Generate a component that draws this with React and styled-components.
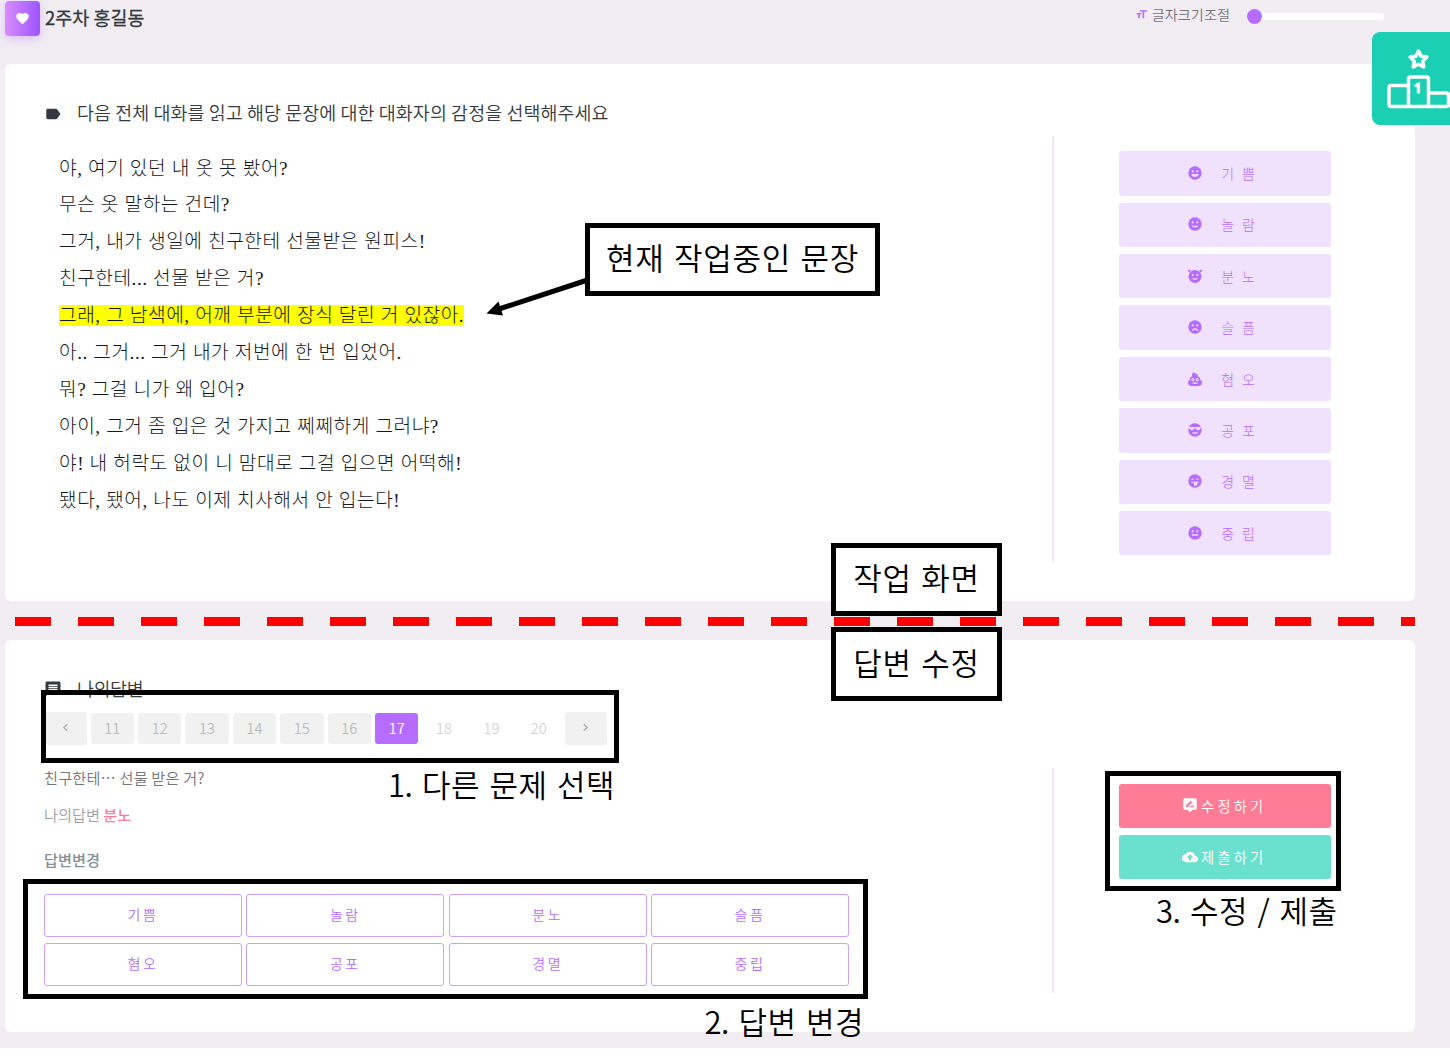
import React from "react";
import styled, { createGlobalStyle } from "styled-components";
import {
  MdFavorite, MdLabel, MdFormatSize, MdMessage, MdChevronLeft, MdChevronRight,
  MdCloudUpload,
} from "react-icons/md";

const GlobalStyle = createGlobalStyle`
  *, *::before, *::after { box-sizing: border-box; }
  body { margin: 0; background: #fff; overflow: hidden; }
`;

const sans = `"Noto Sans CJK KR", sans-serif`;
const serif = `"Liberation Serif", "Noto Sans CJK KR", serif`;
const purple = "#b66dff";

const Page = styled.div`
  position: relative;
  width: 1450px;
  height: 1048px;
  padding-left: 5px;
  background: #f1edf3;
  font-family: ${sans};
  font-weight: 350;
  color: #343a40;
`;

const Header = styled.header`
  display: flex;
  align-items: flex-start;
  justify-content: space-between;
  height: 64px;
  padding: 1px 66px 0 0;
`;

const Brand = styled.div`
  display: flex;
  align-items: flex-start;
  gap: 5px;
`;

const BrandIcon = styled.span`
  display: grid;
  place-items: center;
  width: 35px;
  height: 35px;
  border-radius: 4px;
  color: #fff;
  font-size: 15px;
  background: linear-gradient(to right, #da8cff, #9a55ff);
  box-shadow: 0 3px 8px rgba(182, 109, 255, 0.35);
`;

const BrandTitle = styled.h1`
  margin: 0;
  font-size: 18.4px;
  font-weight: 400;
  letter-spacing: 0.1px;
  line-height: 32px;
  -webkit-text-stroke: 0.3px currentColor;
`;

const FontSizer = styled.label`
  display: flex;
  align-items: center;
  height: 25px;
  color: #76757a;
  font-size: 14.2px;
  svg { color: ${purple}; font-size: 13px; margin: 1px 4px 0 -1px; }
`;

const Track = styled.span`
  width: 137px;
  height: 7px;
  margin: 6px 0 0 17px;
  border-radius: 4px;
  background: #fff;
`;

const Knob = styled.span`
  display: block;
  width: 15px;
  height: 15px;
  margin-top: -4px;
  border-radius: 50%;
  background: ${purple};
`;

const Card = styled.section`
  display: grid;
  grid-template-columns: 1047px 2px 1fr;
  width: 1409.5px;
  height: ${(p) => p.$height}px;
  margin-bottom: 39px;
  border-radius: 6px;
  background: #fff;
`;

const CardMain = styled.div`
  padding: ${(p) => p.$top}px 0 0 39px;
`;

const Divider = styled.div`
  height: ${(p) => p.$height}px;
  margin-top: ${(p) => p.$top}px;
  background: #f1e9f5;
`;

const Actions = styled.div`
  display: flex;
  flex-direction: column;
  gap: 7px;
  padding: ${(p) => p.$top}px 0 0 65px;
`;

const CardTitle = styled.h2`
  display: flex;
  align-items: center;
  gap: 15px;
  height: 32px;
  margin: 0;
  padding-bottom: 2px;
  font-size: 18.45px;
  font-weight: 350;
  letter-spacing: ${(p) => p.$tracking || 0}px;
  white-space: nowrap;
  svg { font-size: 18px; flex: none; margin-top: 3px; }
`;

const Dialogue = styled.div`
  margin-top: 21.5px;
  padding-left: 15px;
  color: #15191d;
  font-family: ${serif};
  font-size: 19.2px;
  font-weight: 300;
  line-height: 36.9px;
  letter-spacing: 0.5px;
  word-spacing: 0.25px;
  white-space: nowrap;
`;

const Line = styled.p`
  margin: 0;
  height: 36.9px;
`;

const Highlight = styled.mark`
  display: inline-block;
  height: 21px;
  line-height: 21px;
  border-radius: 2px;
  color: inherit;
  background: #ff0;
`;

const ActionButton = styled.button`
  display: flex;
  align-items: center;
  justify-content: center;
  width: 211.5px;
  height: 44.4px;
  padding: 0;
  border: 0;
  border-radius: 3px;
  font-family: inherit;
  font-weight: 350;
`;

const EmotionButton = styled(ActionButton)`
  gap: 19px;
  padding: 0 4px 1px 0;
  color: ${purple};
  background: #f0e1ff;
  font-size: 14px;
  font-weight: 300;
  letter-spacing: 2.4px;
`;

const SolidButton = styled(ActionButton)`
  gap: 3px;
  padding: 0 1px 1px 0;
  color: #fff;
  background: ${(p) => p.$color};
  font-size: 14.3px;
  letter-spacing: 3.2px;
  svg { font-size: 16px; }
`;

const Pagination = styled.nav`
  display: flex;
  align-items: center;
  gap: 4px;
  height: 33px;
  margin-top: 7px;
`;

const PageButton = styled.button`
  display: grid;
  place-items: center;
  width: 43.4px;
  height: 31px;
  padding: 0 0 2px;
  border: 0;
  border-radius: 3px;
  font: 350 14.5px ${sans};
  color: ${(p) => (p.$state === "active" ? "#fff" : p.$state === "plain" ? "#d6d4d6" : "#bdbbbd")};
  background: ${(p) => (p.$state === "active" ? purple : p.$state === "plain" ? "transparent" : "#f1f1f1")};
`;

const StepButton = styled(PageButton)`
  width: 42.6px;
  height: 33px;
  color: #aaa;
  font-size: 15px;
`;

const AnswerText = styled.p`
  height: 37px;
  margin: ${(p) => p.$top || 0}px 0 0;
  font-size: 15.2px;
  line-height: 34px;
  letter-spacing: ${(p) => p.$tracking || 0}px;
  color: ${(p) => p.$color};
  font-weight: ${(p) => p.$weight || 350};
`;

const Picked = styled.strong`
  color: #fe7c96;
  font-weight: 500;
`;

const OptionGrid = styled.div`
  display: grid;
  grid-template-columns: repeat(4, 198.2px);
  gap: 6.2px 4.1px;
  margin-top: 15px;
`;

const OptionButton = styled.button`
  height: 43px;
  padding: 0 0 1.5px;
  border: 1px solid #cf9fff;
  border-radius: 3px;
  background: #fff;
  color: ${purple};
  font: 350 14px ${sans};
  letter-spacing: 2.6px;
`;

const RankBadge = styled.div`
  position: absolute;
  top: 31.5px;
  right: 0;
  width: 78.5px;
  height: 93.5px;
  border-radius: 8px 0 0 8px;
  overflow: hidden;
  background: #1bcfb4;
`;

const Annotation = styled.div`
  position: absolute;
  left: ${(p) => p.$x}px;
  top: ${(p) => p.$y}px;
  color: #000;
  font-size: 31px;
  letter-spacing: 0.5px;
  word-spacing: 2px;
  line-height: 36px;
  white-space: nowrap;
`;

const Frame = styled(Annotation)`
  display: grid;
  place-items: center;
  width: ${(p) => p.$w}px;
  height: ${(p) => p.$h}px;
  padding-bottom: 5px;
  border: 5px solid #000;
  letter-spacing: 0.7px;
  background: ${(p) => (p.$filled ? "#fff" : "transparent")};
`;

const StepNumber = styled.span`
  letter-spacing: -0.4px;
`;

const DashedLine = styled.div`
  position: absolute;
  left: 15.3px;
  top: 617px;
  width: 1400px;
  height: 9px;
  background: repeating-linear-gradient(to right, #f00 0 36.4px, transparent 36.4px 63px);
`;

const Arrow = styled.svg`
  position: absolute;
  left: 480px;
  top: 270px;
`;

const eyes = (
  <>
    <circle cx="8.5" cy="9.5" r="1.6" />
    <circle cx="15.5" cy="9.5" r="1.6" />
  </>
);
const bg = "#f0e1ff";

const faces = {
  smile: <>{eyes}<path d="M6.5 13.500h11c-.5 2.800-2.800 4.500-5.500 4.500s-5-1.700-5.500-4.500z" /></>,
  happy: <>{eyes}<path d="M7 14c2 1.200 8 1.200 10 0-1.500 4.500-8.500 4.500-10 0z" /></>,
  devil: <><circle cx="8.500" cy="10.500" r="1.500" /><circle cx="15.500" cy="10.500" r="1.500" /><path d="M7.500 14.700c2 1.200 7 1.200 9 0-1.500 4.200-7.500 4.200-9 0z" /></>,
  sad: <>{eyes}<path d="M7 17.500c1-5 9-5 10 0l-1.800.2c-1.500-2-4.900-2-6.400 0z" /></>,
  neutral: <>{eyes}<path d="M7.500 13.800h9v2.200h-9z" /></>,
  tongue: (
    <>
      <path d="M6 10.200c.5-2.800 4.300-2.800 4.800 0H9.300c-.5-.8-1.300-.8-1.800 0zM13.200 10.200c.5-2.800 4.300-2.800 4.800 0h-1.500c-.5-.8-1.300-.8-1.800 0z" />
      <path d="M6.500 13h11v1.800h-2v2a2.500 2.500 0 0 1-5 0v-2h-4z" />
    </>
  ),
  cool: (
    <>
      <path d="M2.500 7.500h19v2h-1.700c-.3 2.500-1.500 3-3.300 3-2 0-3-1-3.400-3h-2.200c-.4 2-1.400 3-3.400 3-1.800 0-3-.5-3.300-3H2.500z" />
      <path d="M7.500 15c2 1 7 1 9 0-1 4-8 4-9 0z" />
    </>
  ),
};

function Face({ kind }) {
  if (kind === "poop") {
    return (
      <svg width="14" height="14" viewBox="1 1 22 22">
        <path fill={purple} d="M10 1c0 2.500 6.500 2 6.500 6 0 .4 0 .8-.2 1.200 2.200.3 3.700 1.800 3.700 3.800 0 .5-.1.900-.3 1.300C21.800 14 23 15.500 23 17.700c0 3-2.300 5.300-5.500 5.300h-11C3.300 23 1 20.700 1 17.700c0-2.200 1.200-3.700 3.300-4.400-.2-.4-.3-.8-.3-1.300 0-2 1.500-3.500 3.500-3.800C6.500 5.500 7.500 2.500 10 1z" />
        <g fill={bg}><circle cx="8.500" cy="13" r="2.400" /><circle cx="15.500" cy="13" r="2.400" /><path d="M7.500 17.500h9c-1.500 3.400-7.500 3.400-9 0z" /></g>
        <g fill={purple}><circle cx="8.500" cy="13" r="1" /><circle cx="15.500" cy="13" r="1" /></g>
      </svg>
    );
  }
  return (
    <svg width="14" height="14" viewBox="1.500 1.500 21 21">
      <circle cx="12" cy={kind === "devil" ? 12.800 : 12} r={kind === "devil" ? 9.700 : 10} fill={purple} />
      {kind === "devil" && <path fill={purple} d="M1.500 2c1 1.200 2.600 1.500 4.800 2L3.500 7C2 5.800 1.300 4 1.500 2zM22.500 2c-1 1.200-2.600 1.500-4.800 2l2.800 3c1.500-1.200 2.200-3 2-5z" />}
      <g fill={bg}>{faces[kind]}</g>
    </svg>
  );
}

function MessageDraw() {
  return (
    <svg width="16" height="16" viewBox="0 0 24 24" fill="currentColor">
      <path fillRule="evenodd" d="M4 2h16a2 2 0 0 1 2 2v13a2 2 0 0 1-2 2h-4l-4 4-4-4H4a2 2 0 0 1-2-2V4a2 2 0 0 1 2-2zM6 15h2.500l7-7L13 5.500l-7 7zM18 15v-2h-5.500l-2 2z" />
    </svg>
  );
}

const emotions = [
  ["기쁨", "smile"], ["놀람", "happy"], ["분노", "devil"], ["슬픔", "sad"],
  ["혐오", "poop"], ["공포", "cool"], ["경멸", "tongue"], ["중립", "neutral"],
];

const lines = [
  "야, 여기 있던 내 옷 못 봤어?",
  "무슨 옷 말하는 건데?",
  "그거, 내가 생일에 친구한테 선물받은 원피스!",
  "친구한테... 선물 받은 거?",
  "그래, 그 남색에, 어깨 부분에 장식 달린 거 있잖아.",
  "아.. 그거... 그거 내가 저번에 한 번 입었어.",
  "뭐? 그걸 니가 왜 입어?",
  "아이, 그거 좀 입은 것 가지고 쩨쩨하게 그러냐?",
  "야! 내 허락도 없이 니 맘대로 그걸 입으면 어떡해!",
  "됐다, 됐어, 나도 이제 치사해서 안 입는다!",
];

const pages = [11, 12, 13, 14, 15, 16, 17, 18, 19, 20];
const pageState = (n) => (n === 17 ? "active" : n > 17 ? "plain" : "done");

export default function App() {
  return (
    <Page>
      <GlobalStyle />
      <Header>
        <Brand>
          <BrandIcon><MdFavorite /></BrandIcon>
          <BrandTitle>2주차 홍길동</BrandTitle>
        </Brand>
        <FontSizer>
          <MdFormatSize />글자크기조절
          <Track><Knob /></Track>
        </FontSizer>
      </Header>

      <Card $height={537}>
        <CardMain $top={33}>
          <CardTitle $tracking={0.07}><MdLabel />다음 전체 대화를 읽고 해당 문장에 대한 대화자의 감정을 선택해주세요</CardTitle>
          <Dialogue>
            {lines.map((text, i) => (
              <Line key={text}>{i === 4 ? <Highlight>{text}</Highlight> : text}</Line>
            ))}
          </Dialogue>
        </CardMain>
        <Divider $top={72} $height={426} />
        <Actions $top={87.3}>
          {emotions.map(([name, kind]) => (
            <EmotionButton key={name}><Face kind={kind} />{name.split("").join(" ")}</EmotionButton>
          ))}
        </Actions>
      </Card>

      <Card $height={392}>
        <CardMain $top={32.5}>
          <CardTitle $tracking={-0.4}><MdMessage />나의답변</CardTitle>
          <Pagination>
            <StepButton><MdChevronLeft /></StepButton>
            {pages.map((n) => <PageButton key={n} $state={pageState(n)}>{n}</PageButton>)}
            <StepButton><MdChevronRight /></StepButton>
          </Pagination>
          <AnswerText $top={15} $tracking={0.17} $color="#76757a">친구한테… 선물 받은 거?</AnswerText>
          <AnswerText $color="#9c9fa6">나의답변 <Picked>분노</Picked></AnswerText>
          <AnswerText $top={8} $color="#868e96" $weight={500}>답변변경</AnswerText>
          <OptionGrid>
            {emotions.map(([name]) => <OptionButton key={name}>{name}</OptionButton>)}
          </OptionGrid>
        </CardMain>
        <Divider $top={128} $height={225} />
        <Actions $top={143.5}>
          <SolidButton $color="#fe7c96"><MessageDraw />수정하기</SolidButton>
          <SolidButton $color="#6ae0cf"><MdCloudUpload />제출하기</SolidButton>
        </Actions>
      </Card>

      <RankBadge>
        <svg width="78.5" height="93.5" viewBox="1372 32 78.5 93.5" fill="none" stroke="#fff" strokeWidth="3.5" strokeLinejoin="round">
          <path d="M1418.500 51l2.600 5.200 5.800.9-4.200 4.100 1 5.800-5.200-2.700-5.200 2.700 1-5.800-4.200-4.100 5.800-.9z" />
          <path d="M1408.500 106.300V79q0-2 2-2h16q2 0 2 2v27.300M1408.500 85.500h-17.500q-2 0-2 2v17q0 2 2 2h55.500q2 0 2-2V95q0-2-2-2h-18" />
          <text x="1417.500" y="93" fill="#fff" stroke="#fff" strokeWidth="0.800" textAnchor="middle" fontFamily="Open Sans, sans-serif" fontWeight="700" fontSize="14">1</text>
        </svg>
      </RankBadge>

      <DashedLine />
      <Frame $x={585} $y={223} $w={295} $h={73} $filled>현재 작업중인 문장</Frame>
      <Frame $x={831} $y={543} $w={171} $h={73} $filled>작업 화면</Frame>
      <Frame $x={831} $y={627} $w={171} $h={74} $filled>답변 수정</Frame>
      <Frame $x={41} $y={690} $w={578} $h={73} />
      <Frame $x={23} $y={879} $w={845} $h={120} />
      <Frame $x={1105} $y={771} $w={236} $h={120} />
      <Annotation $x={388} $y={766}><StepNumber>1.</StepNumber> 다른 문제 선택</Annotation>
      <Annotation $x={704.5} $y={1003}><StepNumber>2.</StepNumber> 답변 변경</Annotation>
      <Annotation $x={1156} $y={892}><StepNumber>3.</StepNumber> 수정 / 제출</Annotation>
      <Arrow width="110" height="50" viewBox="480 270 110 50">
        <path d="M586 280.500L499 309" stroke="#000" strokeWidth="5" />
        <path d="M486.500 313.500L498.500 301.500L503 315.500Z" />
      </Arrow>
    </Page>
  );
}
